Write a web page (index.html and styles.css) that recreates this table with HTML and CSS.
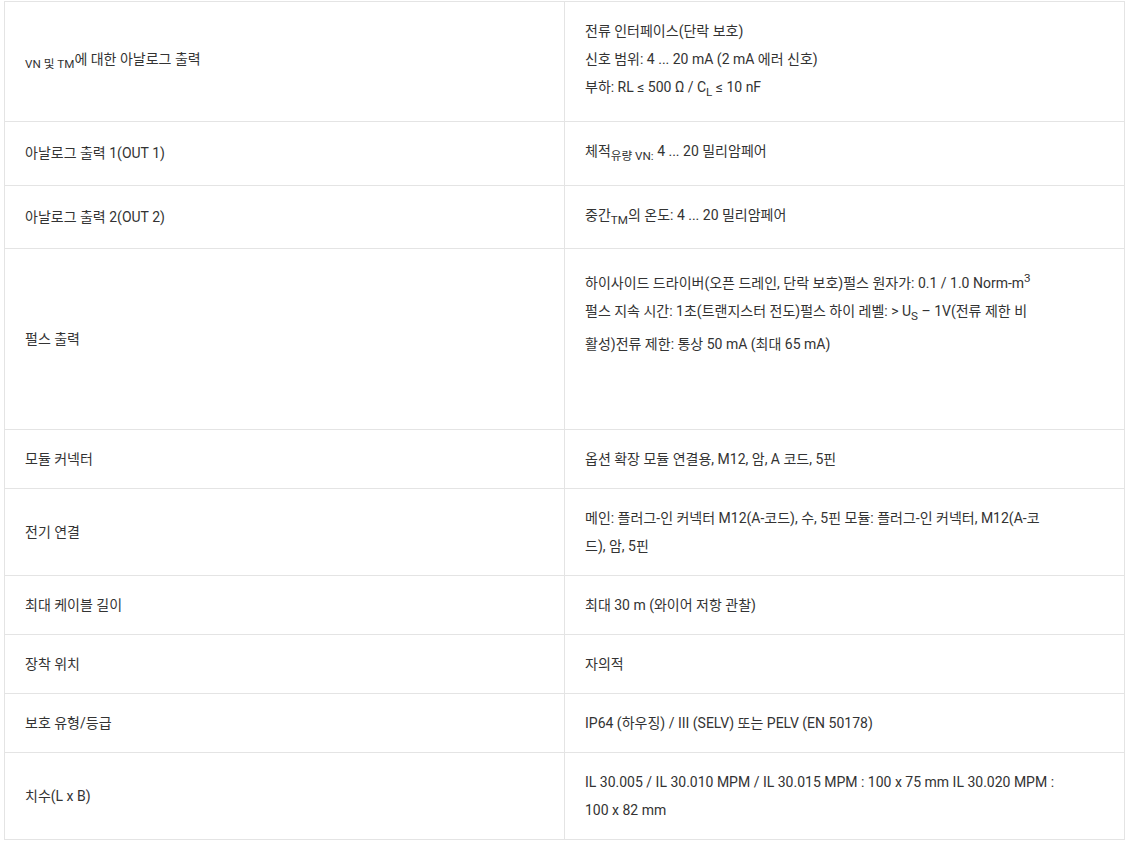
FILE: index.html
```html
<!DOCTYPE html>
<html lang="ko">
<head>
<meta charset="utf-8">
<link rel="stylesheet" href="styles.css">
</head>
<body>
<table class="spec">
<colgroup><col class="c1"><col class="c2"></colgroup>
<tbody>
<tr>
<td class="label"><sub>VN 및 TM</sub>에 대한 아날로그 출력</td>
<td class="value">전류 인터페이스(단락 보호)<br>신호 범위: 4 ... 20 mA (2 mA 에러 신호)<br>부하: RL ≤ 500 Ω / C<sub>L</sub> ≤ 10 nF</td>
</tr>
<tr>
<td class="label">아날로그 출력 1(OUT 1)</td>
<td class="value">체적<sub>유량 VN:</sub> 4 ... 20 밀리암페어</td>
</tr>
<tr>
<td class="label">아날로그 출력 2(OUT 2)</td>
<td class="value">중간<sub>TM</sub>의 온도: 4 ... 20 밀리암페어</td>
</tr>
<tr>
<td class="label">펄스 출력</td>
<td class="value">하이사이드 드라이버(오픈 드레인, 단락 보호)펄스 원자가: 0.1 / 1.0 Norm-m<sup>3</sup><br>펄스 지속 시간: 1초(트랜지스터 전도)펄스 하이 레벨: &gt; U<sub>S</sub> – 1V(전류 제한 비<br>활성)전류 제한: 통상 50 mA (최대 65 mA)<br><br><br></td>
</tr>
<tr>
<td class="label">모듈 커넥터</td>
<td class="value">옵션 확장 모듈 연결용, M12, 암, A 코드, 5핀</td>
</tr>
<tr>
<td class="label">전기 연결</td>
<td class="value">메인: 플러그-인 커넥터 M12(A-코드), 수, 5핀 모듈: 플러그-인 커넥터, M12(A-코드), 암, 5핀</td>
</tr>
<tr>
<td class="label">최대 케이블 길이</td>
<td class="value">최대 30 m (와이어 저항 관찰)</td>
</tr>
<tr>
<td class="label">장착 위치</td>
<td class="value">자의적</td>
</tr>
<tr>
<td class="label">보호 유형/등급</td>
<td class="value">IP64 (하우징) / III (SELV) 또는 PELV (EN 50178)</td>
</tr>
<tr>
<td class="label">치수(L x B)</td>
<td class="value">IL 30.005 / IL 30.010 MPM / IL 30.015 MPM : 100 x 75 mm IL 30.020 MPM : 100 x 82 mm</td>
</tr>
</tbody>
</table>
</body>
</html>
```

FILE: styles.css
```css
html, body {
  margin: 0;
  padding: 0;
  background: #ffffff;
}
body {
  padding: 1px 5px 0 4px;
  font-family: Roboto, "Noto Sans CJK KR", sans-serif;
  font-size: 14px;
  color: #333333;
}
.spec {
  width: 1120px;
  border-collapse: collapse;
  table-layout: fixed;
}
.spec .c1, .spec .c2 {
  width: 560px;
}
.spec td {
  border: 1px solid #e4e4e4;
  padding: 15px 20px;
  line-height: 28px;
  vertical-align: middle;
  text-align: left;
}
.spec td.value {
  padding-right: 66px;
}
.spec sub, .spec sup {
  font-size: smaller;
}
```
